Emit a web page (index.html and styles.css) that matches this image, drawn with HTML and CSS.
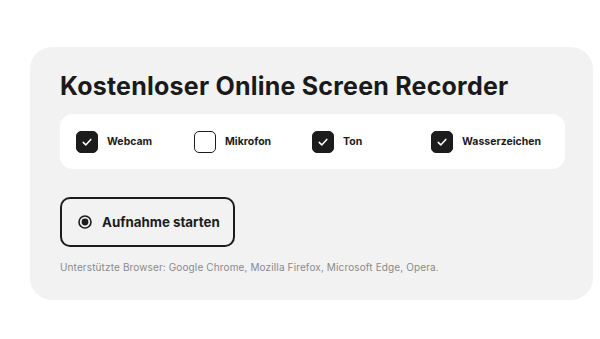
FILE: index.html
```html
<!DOCTYPE html>
<html lang="de">
<head>
<meta charset="utf-8">
<link rel="stylesheet" href="styles.css">
</head>
<body>
<div class="card">
  <h1 class="title">Kostenloser Online Screen Recorder</h1>
  <div class="options">
    <label class="opt"><span class="box on"><svg viewBox="0 0 22 22" width="22" height="22"><path d="M7.2 11.4 L9.8 13.9 L14.8 8.4" fill="none" stroke="#fff" stroke-width="1.5" stroke-linecap="round" stroke-linejoin="round"/></svg></span><span class="lbl">Webcam</span></label>
    <label class="opt"><span class="box"></span><span class="lbl">Mikrofon</span></label>
    <label class="opt"><span class="box on"><svg viewBox="0 0 22 22" width="22" height="22"><path d="M7.2 11.4 L9.8 13.9 L14.8 8.4" fill="none" stroke="#fff" stroke-width="1.5" stroke-linecap="round" stroke-linejoin="round"/></svg></span><span class="lbl">Ton</span></label>
    <label class="opt"><span class="box on"><svg viewBox="0 0 22 22" width="22" height="22"><path d="M7.2 11.4 L9.8 13.9 L14.8 8.4" fill="none" stroke="#fff" stroke-width="1.5" stroke-linecap="round" stroke-linejoin="round"/></svg></span><span class="lbl">Wasserzeichen</span></label>
  </div>
  <button class="rec"><svg class="radio" viewBox="0 0 14 14" width="14" height="14"><circle cx="7" cy="7" r="6" fill="none" stroke="#1c1c1c" stroke-width="1.6"/><circle cx="7" cy="7" r="3.4" fill="#1c1c1c"/></svg><span>Aufnahme starten</span></button>
  <p class="note">Unterstützte Browser: Google Chrome, Mozilla Firefox, Microsoft Edge, Opera.</p>
</div>
</body>
</html>
```
FILE: styles.css
```css
html, body {
  margin: 0;
  padding: 0;
  background: #ffffff;
}
body {
  font-family: Inter, "Noto Sans", sans-serif;
  color: #1c1c1c;
}
.card {
  box-sizing: border-box;
  margin: 47px 0 0 30px;
  width: 563px;
  height: 253px;
  padding: 23px 28px 0 30px;
  background: #f2f2f2;
  border-radius: 22px;
  display: flex;
  flex-direction: column;
  align-items: flex-start;
}
.title {
  margin: 0;
  font-size: 25px;
  line-height: 32px;
  font-weight: 700;
  letter-spacing: 0.22px;
  color: #1a1a1a;
}
.options {
  margin-top: 12px;
  box-sizing: border-box;
  width: 505px;
  height: 55px;
  background: #ffffff;
  border-radius: 13px;
  padding-left: 16px;
  display: grid;
  grid-template-columns: 118px 118px 119px 1fr;
  align-items: center;
}
.opt {
  display: flex;
  align-items: center;
  gap: 9px;
}
.box {
  box-sizing: border-box;
  width: 22px;
  height: 22px;
  border-radius: 5px;
  border: 1.5px solid #1c1c1c;
  background: #ffffff;
  display: flex;
  align-items: center;
  justify-content: center;
}
.box.on {
  background: #1c1c1c;
}
.box svg {
  display: block;
  flex: none;
}
.lbl {
  font-size: 10.5px;
  font-weight: 700;
  color: #1c1c1c;
}
.rec {
  margin-top: 28px;
  box-sizing: border-box;
  width: 175px;
  height: 50px;
  border: 2px solid #1c1c1c;
  border-radius: 10px;
  background: transparent;
  padding: 0 0 0 16px;
  display: flex;
  align-items: center;
  gap: 10px;
  font-family: Inter, "Noto Sans", sans-serif;
  font-size: 13.3px;
  font-weight: 700;
  color: #1c1c1c;
}
.radio {
  display: block;
  flex: none;
}
.note {
  margin: 13px 0 0 0;
  font-size: 10px;
  line-height: 14px;
  letter-spacing: 0.13px;
  color: #8a8a8a;
}
```
